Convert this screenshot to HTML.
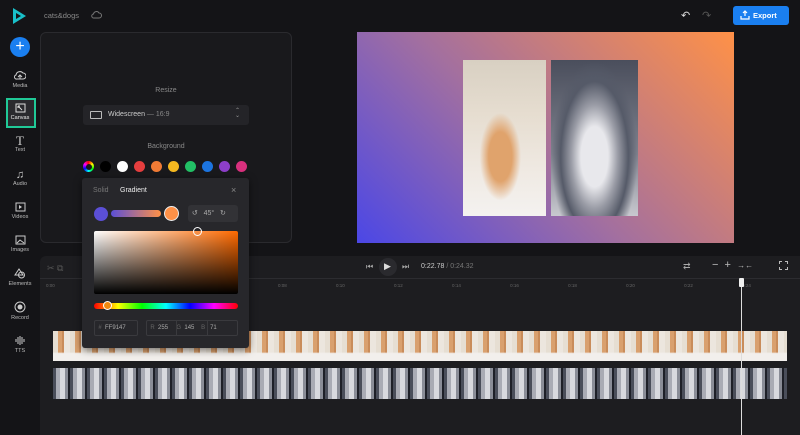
<!DOCTYPE html>
<html><head><style>
*{margin:0;padding:0;box-sizing:border-box}
body{width:800px;height:435px;background:#141417;font-family:"Liberation Sans",sans-serif;color:#ddd;position:relative;overflow:hidden;font-size:7px}
.a{position:absolute}
.side{left:0;top:0;width:40px;height:435px;background:#141417}
.si{position:absolute;left:0;width:40px;text-align:center;color:#bbb;font-size:5.5px}
.si svg{display:block;margin:0 auto 2px}
.dot{position:absolute;top:161px;width:11px;height:11px;border-radius:50%}
.cat{background:radial-gradient(ellipse at 45% 62%,#e0a36c 0 18%,transparent 32%),linear-gradient(to bottom,#d8d0c2 0%,#e6ddd0 35%,#efe9e2 70%,#f4f2f0 100%)}
.dog{background:radial-gradient(ellipse at 50% 62%,#e8e8ec 0 22%,#9a9ca6 38%,#555a68 55%,transparent 70%),linear-gradient(#4a4e5c,#7d808c 60%,#c8c9cf)}
</style></head><body>
<div class="a side"></div>
<svg class="a" style="left:11px;top:7px" width="16" height="18" viewBox="0 0 16 18"><path d="M2 1 L15 9 L2 17 Z" fill="#19c0c9"/><path d="M5 6 L10 9 L5 12Z" fill="#141417"/></svg>
<div class="a" style="left:44px;top:11px;color:#888;font-size:7.5px">cats&amp;dogs</div>
<svg class="a" style="left:91px;top:10px" width="11" height="9" viewBox="0 0 11 9"><path d="M3 8h5a2.5 2.5 0 0 0 0-5A3 3 0 0 0 2.5 4 2 2 0 0 0 3 8z" fill="none" stroke="#777" stroke-width="1"/></svg>
<div class="a" style="left:681px;top:9px;color:#ddd;font-size:11px">↶</div>
<div class="a" style="left:702px;top:9px;color:#555;font-size:11px">↷</div>
<div class="a" style="left:733px;top:6px;width:56px;height:19px;background:#1a7ff0;border-radius:3px;color:#fff;font-size:7.5px;font-weight:bold;line-height:19px;padding-left:20px">Export</div>
<svg class="a" style="left:740px;top:10px" width="10" height="10" viewBox="0 0 10 10"><path d="M5 1v5M3 3l2-2 2 2M1 6v3h8V6" fill="none" stroke="#fff" stroke-width="1.2"/></svg>
<div class="a" style="left:10px;top:37px;width:20px;height:20px;border-radius:50%;background:#1a7ff0;color:#fff;font-size:16px;line-height:19px;text-align:center">+</div>
<div class="si" style="top:70px"><svg width="12" height="11"><path d="M3 9h6a3 3 0 0 0 0-6 4 4 0 0 0-7 2 2 2 0 0 0 1 4zM6 9V5M4 7l2-2 2 2" fill="none" stroke="#ccc" stroke-width="1"/></svg>Media</div>
<div class="a" style="left:6px;top:98px;width:30px;height:30px;border:2px solid #20c997;background:#2a2a2e"></div>
<div class="si" style="top:103px;color:#eee"><svg width="11" height="10"><rect x="1" y="1" width="9" height="8" fill="none" stroke="#ddd"/><path d="M3 3l4 4M3 3h2M3 3v2" stroke="#ddd"/></svg>Canvas</div>
<div class="si" style="top:135px"><div style="font-family:'Liberation Serif';font-size:13px;color:#ccc;line-height:12px">T</div>Text</div>
<div class="si" style="top:169px"><div style="font-size:11px;color:#ccc;line-height:12px">♫</div>Audio</div>
<div class="si" style="top:202px"><svg width="11" height="10"><rect x="1" y="1" width="9" height="8" fill="none" stroke="#ccc"/><path d="M4 3l3 2-3 2z" fill="#ccc"/></svg>Videos</div>
<div class="si" style="top:235px"><svg width="11" height="10"><rect x="1" y="1" width="9" height="8" fill="none" stroke="#ccc"/><path d="M2 8l3-3 4 3" fill="none" stroke="#ccc"/></svg>Images</div>
<div class="si" style="top:268px"><svg width="12" height="11"><path d="M5 1l4 6H1z" fill="none" stroke="#ccc"/><circle cx="7.5" cy="7" r="3" fill="none" stroke="#ccc"/></svg>Elements</div>
<div class="si" style="top:301px"><svg width="12" height="12"><circle cx="6" cy="6" r="5" fill="none" stroke="#ccc"/><circle cx="6" cy="6" r="2.5" fill="#ccc"/></svg>Record</div>
<div class="si" style="top:335px"><svg width="12" height="11"><path d="M2 4v3M4 2v7M6 1v9M8 2v7M10 4v3" stroke="#ccc"/></svg>TTS</div>
<div class="a" style="left:40px;top:32px;width:252px;height:211px;border:1px solid #2a2a2e;border-radius:6px;background:#19191c"></div>
<div class="a" style="left:40px;top:87px;width:252px;text-align:center;color:#888">Resize</div>
<div class="a" style="left:83px;top:105px;width:166px;height:20px;background:#242428;border-radius:3px"></div>
<div class="a" style="left:90px;top:111px;width:12px;height:8px;border:1px solid #bbb;border-radius:1px"></div>
<div class="a" style="left:108px;top:111px;color:#ccc">Widescreen <span style="color:#888">— 16:9</span></div>
<div class="a" style="left:235px;top:109px;color:#999;font-size:6px;line-height:5px">⌃<br>⌄</div>
<div class="a" style="left:40px;top:143px;width:252px;text-align:center;color:#888">Background</div>
<div class="dot" style="left:83px;background:conic-gradient(red,yellow,lime,cyan,blue,magenta,red)"><div style="margin:2.5px;width:6px;height:6px;border-radius:50%;background:#19191c"></div></div>
<div class="dot" style="left:100px;background:#000"></div>
<div class="dot" style="left:117px;background:#fff"></div>
<div class="dot" style="left:134px;background:#e53e3e"></div>
<div class="dot" style="left:151px;background:#f07b35"></div>
<div class="dot" style="left:168px;background:#f5b820"></div>
<div class="dot" style="left:185px;background:#22c065"></div>
<div class="dot" style="left:202px;background:#1c74e0"></div>
<div class="dot" style="left:219px;background:#8d3fc9"></div>
<div class="dot" style="left:236px;background:#d8307d"></div>
<div class="a" style="left:357px;top:32px;width:377px;height:211px;background:linear-gradient(45deg,#4b47e6 0%,#a26fa0 45%,#ff9147 100%)"></div>
<div class="a cat" style="left:463px;top:60px;width:83px;height:156px"></div>
<div class="a dog" style="left:551px;top:60px;width:87px;height:156px"></div>
<div class="a" style="left:40px;top:256px;width:760px;height:179px;background:#1d1d20;border-top-left-radius:6px"></div>
<div class="a" style="left:40px;top:278px;width:760px;height:1px;background:#2c2c30"></div>
<div class="a" style="left:47px;top:263px;color:#555;font-size:9px">✂ ⧉</div>
<div class="a" style="left:379px;top:258px;width:18px;height:18px;border-radius:50%;background:#2a2a2e"></div>
<div class="a" style="left:366px;top:262px;color:#aaa;font-size:8px">⏮</div>
<div class="a" style="left:384px;top:261px;color:#ddd;font-size:9px">▶</div>
<div class="a" style="left:402px;top:262px;color:#aaa;font-size:8px">⏭</div>
<div class="a" style="left:421px;top:263px;color:#ccc;font-size:7px">0:22.78 <span style="color:#777">/ 0:24.32</span></div>
<div class="a" style="left:683px;top:261px;color:#aaa;font-size:9px">⇄</div>
<div class="a" style="left:712px;top:259px;color:#bbb;font-size:11px">−&nbsp;&nbsp;+&nbsp;&nbsp;<span style="font-size:8px">→←</span></div>
<div class="a" style="left:779px;top:261px;width:9px;height:9px;border:1px dashed #bbb"></div>
<div class="a" style="left:46px;top:283px;width:750px;color:#666;font-size:4.5px;word-spacing:48px;white-space:nowrap">0:00 0:02 0:04 0:06 0:08 0:10 0:12 0:14 0:16 0:18 0:20 0:22 0:24</div>
<div class="a" style="left:53px;top:331px;width:734px;height:30px;background:linear-gradient(to bottom,transparent 70%,#f2efec 75%),repeating-linear-gradient(90deg,#e6ded2 0 5px,#d9a06e 5px 9px,#c98c5a 9px 11px,#ece6de 11px 17px)"></div>
<div class="a" style="left:53px;top:368px;width:734px;height:31px;background:repeating-linear-gradient(90deg,#4a4e5a 0 3px,#a9abb4 3px 7px,#d8d9de 7px 12px,#8a8d97 12px 15px,#1e2028 15px 17px)"></div>
<div class="a" style="left:741px;top:278px;width:1px;height:157px;background:#ddd"></div>
<div class="a" style="left:739px;top:278px;width:5px;height:9px;background:#eee;border-radius:1px"></div>
<div class="a" style="left:82px;top:178px;width:167px;height:170px;background:#27272b;border-radius:3px;box-shadow:0 2px 8px #0008"></div>
<div class="a" style="left:93px;top:187px;color:#777">Solid</div>
<div class="a" style="left:120px;top:187px;color:#eee">Gradient</div>
<div class="a" style="left:231px;top:185px;color:#888;font-size:9px">×</div>
<div class="a" style="left:94px;top:207px;width:14px;height:14px;border-radius:50%;background:#5b4fd6"></div>
<div class="a" style="left:111px;top:210px;width:50px;height:7px;border-radius:4px;background:linear-gradient(90deg,#5b4fd6,#ff9147)"></div>
<div class="a" style="left:164px;top:206px;width:15px;height:15px;border-radius:50%;background:#ff9147;border:1.5px solid #eee"></div>
<div class="a" style="left:188px;top:205px;width:50px;height:17px;background:#323236;border-radius:3px;color:#aaa;line-height:17px;font-size:7px">&nbsp;&nbsp;↺&nbsp;&nbsp;&nbsp;45°&nbsp;&nbsp;&nbsp;↻</div>
<div class="a" style="left:94px;top:231px;width:144px;height:63px;border-radius:2px;background:linear-gradient(to bottom,transparent,#000),linear-gradient(to right,#fff,#ff6a00)"></div>
<div class="a" style="left:193px;top:227px;width:9px;height:9px;border-radius:50%;border:1.5px solid #fff"></div>
<div class="a" style="left:94px;top:303px;width:144px;height:6px;border-radius:3px;background:linear-gradient(90deg,red,#ff0,lime,cyan,blue,#f0f,red)"></div>
<div class="a" style="left:103px;top:301px;width:9px;height:9px;border-radius:50%;background:#f08a10;border:1.5px solid #fff"></div>
<div class="a" style="left:94px;top:320px;width:44px;height:16px;border:1px solid #3a3a3e;border-radius:2px;color:#aaa;line-height:14px;font-size:6px">&nbsp;&nbsp;<span style="color:#666">#</span>&nbsp;&nbsp;FF9147</div>
<div class="a" style="left:146px;top:320px;width:92px;height:16px;border:1px solid #3a3a3e;border-radius:2px;color:#aaa;line-height:14px;font-size:6px;white-space:pre">  <span style="color:#666">R</span>  255     <span style="color:#666">G</span>  145    <span style="color:#666">B</span>   71</div>
<div class="a" style="left:176px;top:320px;width:1px;height:16px;background:#3a3a3e"></div>
<div class="a" style="left:207px;top:320px;width:1px;height:16px;background:#3a3a3e"></div>
</body></html>
